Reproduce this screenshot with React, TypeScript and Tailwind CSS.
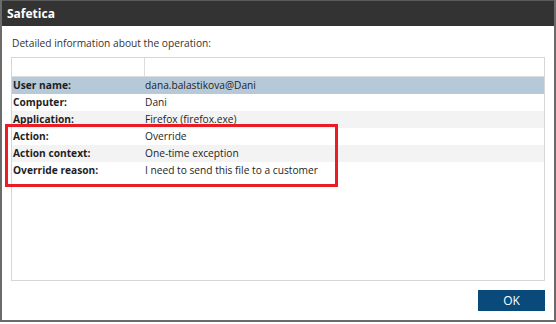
import React from 'react';

const rows = [
  { label: 'User name:', value: 'dana.balastikova@Dani', selected: true },
  { label: 'Computer:', value: 'Dani' },
  { label: 'Application:', value: 'Firefox (firefox.exe)' },
  { label: 'Action:', value: 'Override' },
  { label: 'Action context:', value: 'One-time exception' },
  { label: 'Override reason:', value: 'I need to send this file to a customer' },
];

function Row({ label, value, bg }: { label: string; value: string; bg: string }) {
  return (
    <div className={`flex h-[17px] items-center ${bg}`}>
      <div className="w-[133px] pl-[1px] font-bold text-[#1e1e1e]">{label}</div>
      <div className="flex-1 text-[#1e1e1e]">{value}</div>
    </div>
  );
}

export default function App() {
  return (
    <div
      className="w-[556px] h-[324px] bg-white overflow-hidden"
      style={{ fontFamily: '"Open Sans", "Noto Sans", sans-serif' }}
    >
      <div className="h-[322px] flex flex-col border-l-2 border-r-2 border-b-2 border-[#6b6b6b] bg-white">
        {/* Title bar */}
        <div className="h-[26px] bg-[#333333] border-t border-[#5a5a5a] flex items-center pl-[5px]">
          <span className="text-white font-bold text-[12px] leading-none">Safetica</span>
        </div>

        <div className="flex-1 flex flex-col px-[9px] pt-[9px] text-[10.2px] leading-none">
          <div className="h-[16px] flex items-center pl-[1px] text-[#333]">
            Detailed information about the operation:
          </div>

          {/* Grid */}
          <div className="relative mt-[6px] h-[224px] border border-[#d6d6d6] bg-white">
            <div className="flex h-[19px] border-b border-[#dcdcdc]">
              <div className="w-[133px] border-r border-[#dcdcdc]" />
              <div className="flex-1" />
            </div>
            {rows.map((r, i) => (
              <Row
                key={r.label}
                label={r.label}
                value={r.value}
                bg={r.selected ? 'bg-[#b5c9d9]' : i % 2 === 0 ? 'bg-[#f3f3f3]' : 'bg-white'}
              />
            ))}

            {/* Highlight annotation */}
            <div className="absolute left-[-7px] top-[66px] w-[333px] h-[63px] border-[3px] border-[#ea1c24]" />
          </div>

          <div className="flex justify-end mt-[9px]">
            <button className="w-[67px] h-[21px] bg-[#0a4a7a] text-white text-[12px] leading-none">
              OK
            </button>
          </div>
        </div>
      </div>
    </div>
  );
}
